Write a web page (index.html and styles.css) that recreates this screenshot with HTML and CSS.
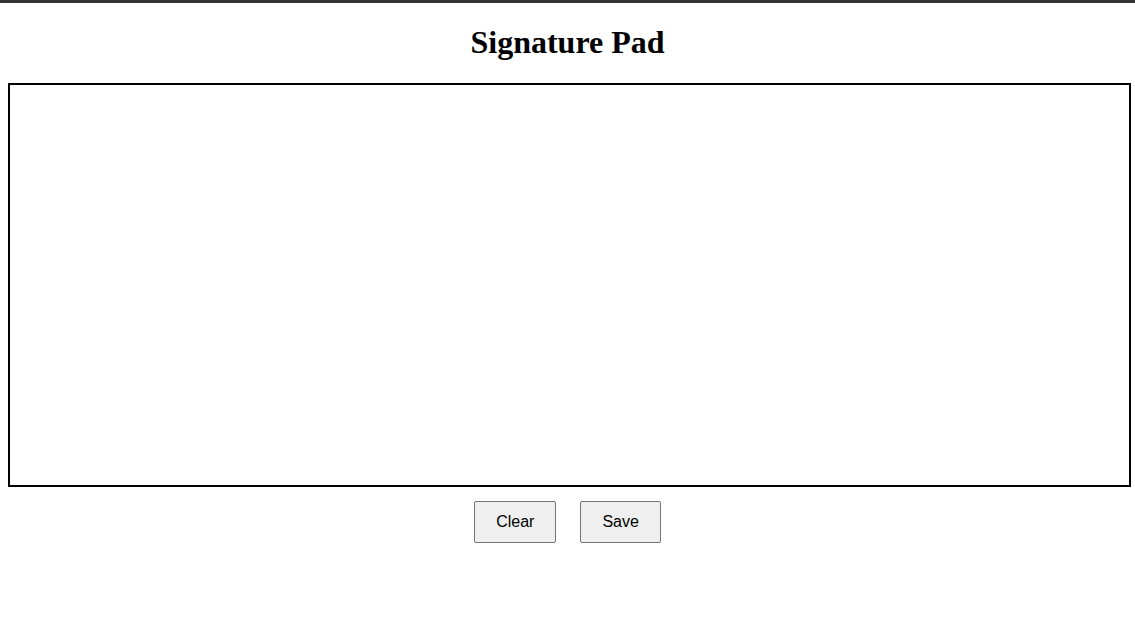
FILE: index.html
```html
<!DOCTYPE html>
<html>
<head>
<meta charset="utf-8">
<title>Signature Pad</title>
<link rel="stylesheet" href="styles.css">
</head>
<body>
<h1 class="title">Signature Pad</h1>
<div class="pad"></div>
<div class="actions">
  <button class="btn">Clear</button>
  <button class="btn">Save</button>
</div>
</body>
</html>
```
FILE: styles.css
```css
html {
  border-top: 3px solid #333;
  background: #fff;
}
body {
  margin: 0;
  padding: 21px 8px 0;
  font-family: "Liberation Serif", "Times New Roman", serif;
}
.title {
  font-size: 32px;
  font-weight: bold;
  text-align: center;
  margin: 0 0 22px;
  line-height: 37px;
  color: #000;
}
.pad {
  width: 100%;
  height: 400px;
  border: 2px solid #000;
  background: #fff;
}
.actions {
  display: flex;
  justify-content: center;
  gap: 24px;
  margin-top: 14px;
}
.btn {
  font-family: "Liberation Sans", Arial, sans-serif;
  font-size: 16px;
  height: 42px;
  padding: 0 21px;
  background: #efefef;
  border: 1px solid #767676;
  border-radius: 2px;
  color: #000;
}
```
